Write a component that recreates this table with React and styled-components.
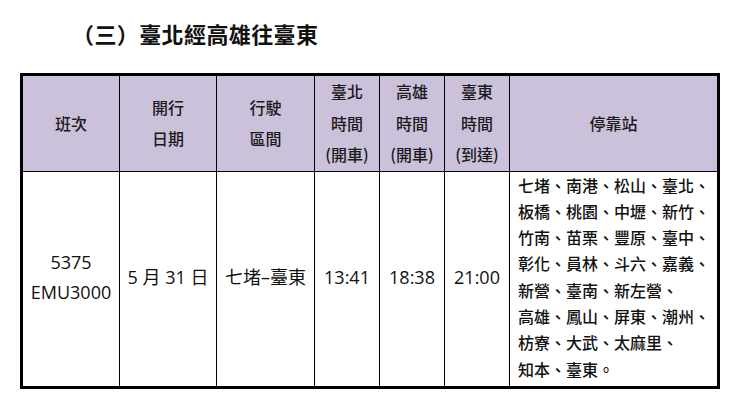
import React from "react";
import styled, { createGlobalStyle } from "styled-components";

const GlobalStyle = createGlobalStyle`
    html, body {
        margin: 0;
        padding: 0;
        background: #ffffff;
    }
    body {
        font-family: "Open Sans", "Noto Sans CJK TC", sans-serif;
        color: #111;
    }
`;

const Page = styled.div`
    display: flex;
    flex-direction: column;
    width: 741px;
    height: 404px;
    padding: 0 0 0 20px;
    box-sizing: border-box;
    overflow: hidden;
`;

const Title = styled.h1`
    flex: none;
    margin: 0;
    padding: 21px 0 0 52px;
    height: 73px;
    box-sizing: border-box;
    font-family: "Noto Sans CJK TC", sans-serif;
    font-size: 22px;
    line-height: 24px;
    font-weight: 700;
    color: #111;
    letter-spacing: 0.4px;
`;

const Table = styled.table`
    flex: none;
    width: 700px;
    table-layout: fixed;
    border-collapse: collapse;
    border: 3px solid #000;
`;

const HeadRow = styled.tr`
    height: 94px;
    background: #ccc1da;
`;

const BodyRow = styled.tr`
    height: 213px;
`;

const HeadCell = styled.th`
    border: 1px solid #000;
    padding: 0;
    font-family: "Noto Sans CJK TC", sans-serif;
    font-size: 16px;
    font-weight: 500;
    line-height: 31.5px;
    text-align: center;
    vertical-align: middle;
    color: #1a1a1a;
`;

const Cell = styled.td`
    border: 1px solid #000;
    padding: 0 0 4px;
    font-family: "Open Sans", "Noto Sans CJK TC", sans-serif;
    font-size: 18px;
    line-height: 30px;
    text-align: center;
    vertical-align: middle;
    color: #111;
    white-space: nowrap;
`;

const StopsCell = styled.td`
    border: 1px solid #000;
    padding: 0 0 4px 8px;
    font-family: "Noto Sans CJK TC", sans-serif;
    font-size: 16px;
    font-weight: 500;
    line-height: 26.3px;
    text-align: left;
    vertical-align: middle;
    color: #111;
`;

const StopLine = styled.div`
    white-space: nowrap;
`;

const columns = [98, 97, 98, 65, 65, 65, 209];

const headers = [
    ["班次"],
    ["開行", "日期"],
    ["行駛", "區間"],
    ["臺北", "時間", "(開車)"],
    ["高雄", "時間", "(開車)"],
    ["臺東", "時間", "(到達)"],
    ["停靠站"],
];

const stops = [
    "七堵、南港、松山、臺北、",
    "板橋、桃園、中壢、新竹、",
    "竹南、苗栗、豐原、臺中、",
    "彰化、員林、斗六、嘉義、",
    "新營、臺南、新左營、",
    "高雄、鳳山、屏東、潮州、",
    "枋寮、大武、太麻里、",
    "知本、臺東。",
];

const App = () => {
    return (
        <>
            <GlobalStyle />
            <Page>
                <Title>（三）臺北經高雄往臺東</Title>
                <Table>
                    <colgroup>
                        {columns.map((w, i) => (
                            <col key={i} style={{ width: w }} />
                        ))}
                    </colgroup>
                    <thead>
                        <HeadRow>
                            {headers.map((lines, i) => (
                                <HeadCell key={i}>
                                    {lines.map((l, j) => (
                                        <div key={j}>{l}</div>
                                    ))}
                                </HeadCell>
                            ))}
                        </HeadRow>
                    </thead>
                    <tbody>
                        <BodyRow>
                            <Cell>
                                <div>5375</div>
                                <div>EMU3000</div>
                            </Cell>
                            <Cell>5 月 31 日</Cell>
                            <Cell>七堵–臺東</Cell>
                            <Cell>13:41</Cell>
                            <Cell>18:38</Cell>
                            <Cell>21:00</Cell>
                            <StopsCell>
                                {stops.map((s, i) => (
                                    <StopLine key={i}>{s}</StopLine>
                                ))}
                            </StopsCell>
                        </BodyRow>
                    </tbody>
                </Table>
            </Page>
        </>
    );
};

export default App;
